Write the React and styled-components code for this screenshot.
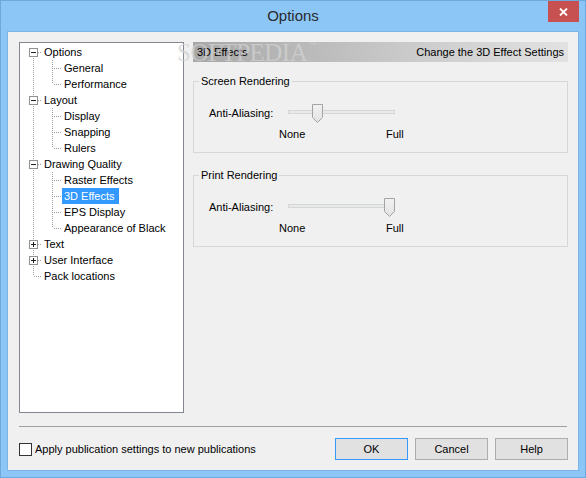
import React from "react";
import styled, { createGlobalStyle } from "styled-components";

const GlobalStyle = createGlobalStyle`
  html, body { margin: 0; padding: 0; }
  body {
    width: 586px;
    height: 478px;
    overflow: hidden;
    font-family: "Liberation Sans", Arial, sans-serif;
    font-size: 11px;
    color: #000;
  }
  * { box-sizing: border-box; }
`;

const Window = styled.div`
  width: 586px;
  height: 478px;
  background: #8bc6f7;
  border: 1px solid #6fa8dc;
  padding: 0 6px 6px 6px;
  display: flex;
  flex-direction: column;
`;

const TitleBar = styled.div`
  height: 30px;
  display: grid;
  grid-template-columns: 1fr auto 1fr;
  align-items: start;
`;

const Title = styled.div`
  grid-column: 2;
  font-size: 15px;
  line-height: 30px;
  color: #2a2a2a;
`;

const CloseButton = styled.div`
  grid-column: 3;
  justify-self: end;
  width: 31px;
  height: 21px;
  background: #c75050;
  display: flex;
  align-items: center;
  justify-content: center;
`;

const Client = styled.div`
  flex: 1;
  position: relative;
  background: #f0f0f0;
  border: 1px solid #7db3e5;
  padding: 10px 10px 0 11px;
  display: flex;
  flex-direction: column;
`;

const Main = styled.div`
  height: 371px;
  display: flex;
  gap: 9px;
`;

const TreePanel = styled.div`
  width: 165px;
  flex: none;
  background: #fff;
  border: 1px solid #828790;
  padding-top: 1px;
`;

const TreeRow = styled.div`
  height: 16px;
  display: flex;
  align-items: center;
  svg { display: block; flex: none; }
`;

const TreeLabel = styled.span`
  height: 16px;
  line-height: 16px;
  padding: 0 4px 0 2px;
  white-space: nowrap;
  background: ${(p) => (p.$selected ? "#3399ff" : "transparent")};
  color: ${(p) => (p.$selected ? "#fff" : "#000")};
`;

const SettingsPane = styled.div`
  flex: 1;
  display: flex;
  flex-direction: column;
`;

const PaneHeader = styled.div`
  height: 20px;
  display: flex;
  align-items: center;
  justify-content: space-between;
  padding: 0 4px 0 4px;
  background: linear-gradient(to right, #a7a7a7, #c9c9c9 55%, #e2e2e2);
`;

const Group = styled.fieldset`
  margin: ${(p) => (p.$first ? "13px" : "16px")} 0 0 0;
  padding: 0 0 11px 0;
  border: 1px solid #d7d7d7;
  min-width: 0;
`;

const GroupLegend = styled.legend`
  margin-left: 5px;
  padding: 0 2px;
  line-height: 13px;
`;

const SliderRow = styled.div`
  margin: 16px 0 0 15px;
  display: flex;
  align-items: center;
  height: 19px;
`;

const FieldLabel = styled.span`
  width: 79px;
  flex: none;
  line-height: 13px;
`;

const Slider = styled.div`
  position: relative;
  width: 107px;
  height: 19px;
`;

const Track = styled.div`
  position: absolute;
  left: 0;
  right: 0;
  top: 6px;
  height: 4px;
  background: #e7eaea;
  border: 1px solid #d6d6d6;
`;

const Thumb = styled.svg`
  position: absolute;
  top: 0;
  display: block;
`;

const ScaleRow = styled.div`
  margin: 5px 0 0 85px;
  display: flex;
  line-height: 13px;
`;

const ScaleLabel = styled.span`
  width: ${(p) => p.$width || "auto"};
`;

const Separator = styled.div`
  margin-top: 13px;
  height: 1px;
  background: #a0a0a0;
  margin-right: 1px;
`;

const Footer = styled.div`
  margin-top: 11px;
  height: 22px;
  display: flex;
  align-items: center;
  justify-content: space-between;
`;

const CheckRow = styled.label`
  display: flex;
  align-items: center;
  gap: 3px;
`;

const CheckBox = styled.span`
  width: 13px;
  height: 13px;
  border: 1px solid #333;
  background: #fff;
`;

const ButtonRow = styled.div`
  display: flex;
  gap: 7px;
`;

const DialogButton = styled.button`
  width: 73px;
  height: 22px;
  margin: 0;
  padding: 0;
  font-family: inherit;
  font-size: 11px;
  color: #000;
  background: #e1e1e1;
  border: 1px solid ${(p) => (p.$primary ? "#3399ff" : "#adadad")};
`;

const Watermark = styled.div`
  position: absolute;
  left: 169px;
  top: 8px;
  font-family: "Liberation Serif", "Times New Roman", serif;
  font-size: 25px;
  line-height: 25px;
  letter-spacing: -0.5px;
  color: rgba(210, 210, 210, 0.75);
  pointer-events: none;
  sup {
    font-family: "Liberation Sans", Arial, sans-serif;
    font-size: 7px;
    vertical-align: top;
    line-height: 10px;
    margin-left: 2px;
  }
`;

const DOT = { stroke: "#a0a0a0", strokeWidth: 1, strokeDasharray: "1 1" };

function RootConnector({ first, last, expander }) {
  return (
    <svg width="22" height="16" shapeRendering="crispEdges">
      {!first && <line x1="13.5" y1="0" x2="13.5" y2="8" style={DOT} />}
      {!last && <line x1="13.5" y1="8" x2="13.5" y2="16" style={DOT} />}
      <line x1="14" y1="8.5" x2="22" y2="8.5" style={DOT} />
      {expander && (
        <g>
          <rect x="9.5" y="4.5" width="8" height="8" fill="#fff" stroke="#919191" />
          <line x1="11" y1="8.5" x2="16" y2="8.5" stroke="#1e1e1e" />
          {expander === "plus" && (
            <line x1="13.5" y1="6" x2="13.5" y2="11" stroke="#1e1e1e" />
          )}
        </g>
      )}
    </svg>
  );
}

function ChildConnector({ lastChild }) {
  return (
    <svg width="42" height="16" shapeRendering="crispEdges">
      <line x1="13.5" y1="0" x2="13.5" y2="16" style={DOT} />
      <line x1="32.5" y1="0" x2="32.5" y2="8" style={DOT} />
      {!lastChild && <line x1="32.5" y1="8" x2="32.5" y2="16" style={DOT} />}
      <line x1="34" y1="8.5" x2="42" y2="8.5" style={DOT} />
    </svg>
  );
}

const tree = [
  { label: "Options", level: 0, expander: "minus", first: true },
  { label: "General", level: 1 },
  { label: "Performance", level: 1, lastChild: true },
  { label: "Layout", level: 0, expander: "minus" },
  { label: "Display", level: 1 },
  { label: "Snapping", level: 1 },
  { label: "Rulers", level: 1, lastChild: true },
  { label: "Drawing Quality", level: 0, expander: "minus" },
  { label: "Raster Effects", level: 1 },
  { label: "3D Effects", level: 1, selected: true },
  { label: "EPS Display", level: 1 },
  { label: "Appearance of Black", level: 1, lastChild: true },
  { label: "Text", level: 0, expander: "plus" },
  { label: "User Interface", level: 0, expander: "plus" },
  { label: "Pack locations", level: 0, last: true },
];

function TrackBar({ value, max }) {
  const left = (value / max) * 96;
  return (
    <Slider>
      <Track />
      <Thumb width="11" height="19" style={{ left }} shapeRendering="crispEdges">
        <defs>
          <linearGradient id="thumbFill" x1="0" y1="0" x2="0" y2="1">
            <stop offset="0" stopColor="#f2f2f2" />
            <stop offset="1" stopColor="#e2e2e2" />
          </linearGradient>
        </defs>
        <polygon
          points="0.5,0.5 10.5,0.5 10.5,13.5 5.5,18.5 0.5,13.5"
          fill="url(#thumbFill)"
          stroke="#a3a3a3"
          shapeRendering="geometricPrecision"
        />
      </Thumb>
    </Slider>
  );
}

function RenderGroup({ title, value, first }) {
  return (
    <Group $first={first}>
      <GroupLegend>{title}</GroupLegend>
      <SliderRow>
        <FieldLabel>Anti-Aliasing:</FieldLabel>
        <TrackBar value={value} max={4} />
      </SliderRow>
      <ScaleRow>
        <ScaleLabel $width="107px">None</ScaleLabel>
        <ScaleLabel>Full</ScaleLabel>
      </ScaleRow>
    </Group>
  );
}

export default function App() {
  return (
    <>
      <GlobalStyle />
      <Window>
        <TitleBar>
          <Title>Options</Title>
          <CloseButton>
            <svg width="9" height="8" viewBox="0 0 9 8">
              <path d="M1 0.5 L8 7.5 M8 0.5 L1 7.5" stroke="#fff" strokeWidth="1.8" />
            </svg>
          </CloseButton>
        </TitleBar>
        <Client>
          <Main>
            <TreePanel>
              {tree.map((n) => (
                <TreeRow key={n.label}>
                  {n.level === 0 ? (
                    <RootConnector first={n.first} last={n.last} expander={n.expander} />
                  ) : (
                    <ChildConnector lastChild={n.lastChild} />
                  )}
                  <TreeLabel $selected={n.selected}>{n.label}</TreeLabel>
                </TreeRow>
              ))}
            </TreePanel>
            <SettingsPane>
              <PaneHeader>
                <span>3D Effects</span>
                <span>Change the 3D Effect Settings</span>
              </PaneHeader>
              <RenderGroup title="Screen Rendering" value={1} first />
              <RenderGroup title="Print Rendering" value={4} />
            </SettingsPane>
          </Main>
          <Separator />
          <Footer>
            <CheckRow>
              <CheckBox />
              <span>Apply publication settings to new publications</span>
            </CheckRow>
            <ButtonRow>
              <DialogButton $primary>OK</DialogButton>
              <DialogButton>Cancel</DialogButton>
              <DialogButton>Help</DialogButton>
            </ButtonRow>
          </Footer>
          <Watermark>
            SOFTPEDIA<sup>™</sup>
          </Watermark>
        </Client>
      </Window>
    </>
  );
}
